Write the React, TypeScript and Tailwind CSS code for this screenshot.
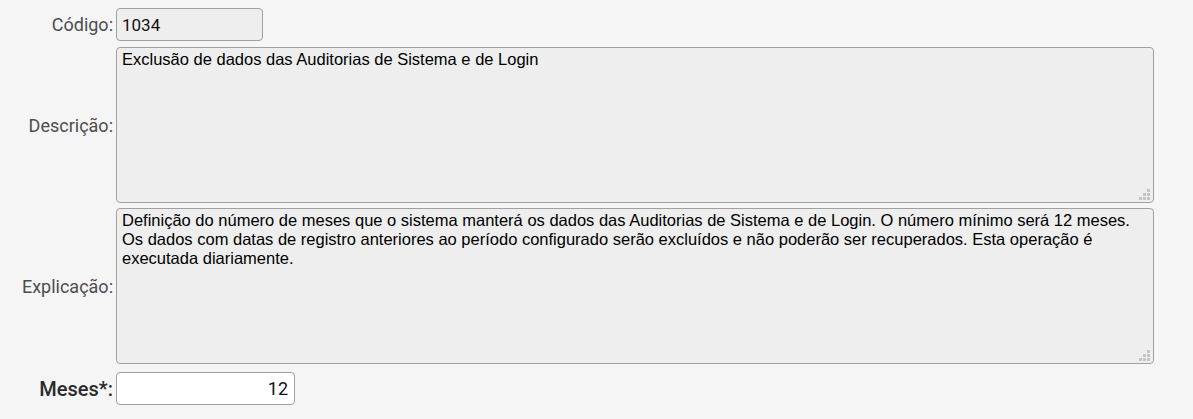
import { useState } from "react";

const labelFont = { fontFamily: "Roboto, 'Liberation Sans', sans-serif" };
const areaFont = { fontFamily: "'Liberation Sans', Arial, sans-serif" };

// Windows-style resize grip drawn over the textarea corner
function Grip() {
  const dots = [
    [8, 0],
    [4, 4], [8, 4],
    [0, 8], [4, 8], [8, 8],
  ];
  return (
    <svg className="pointer-events-none absolute bottom-[3px] right-[4px]" width="11" height="11" viewBox="0 0 11 11">
      {dots.map(([x, y], i) => (
        <rect key={i} x={x} y={y} width="3" height="3" fill="#c4c4c4" />
      ))}
    </svg>
  );
}

export default function App() {
  const [meses, setMeses] = useState("12");

  return (
    <div className="min-h-screen w-full bg-[#f5f5f5]" style={labelFont}>
      <div className="grid grid-cols-[113px_1038px] gap-x-[3px] pt-[8px]">
        {/* Código */}
        <label className="flex items-center justify-end text-[18px] text-[#4d4d4d]">Código:</label>
        <div>
          <input
            readOnly
            value="1034"
            className="h-[33px] w-[147px] rounded-[4px] border border-[#a0a0a0] bg-[#eeeeee] px-[5px] text-[17px] text-[#111] outline-none"
            style={labelFont}
          />
        </div>

        {/* Descrição */}
        <label className="mt-[6px] flex items-center justify-end text-[18px] text-[#4d4d4d]">Descrição:</label>
        <div className="relative mt-[6px]">
          <textarea
            readOnly
            value="Exclusão de dados das Auditorias de Sistema e de Login"
            className="block h-[156px] w-[1038px] resize-none rounded-[4px] border border-[#a0a0a0] bg-[#eeeeee] px-[5px] py-[2px] text-[16.5px] leading-[19px] text-black outline-none"
            style={areaFont}
          />
          <Grip />
        </div>

        {/* Explicação */}
        <label className="mt-[5px] flex items-center justify-end text-[18px] text-[#4d4d4d]">Explicação:</label>
        <div className="relative mt-[5px]">
          <textarea
            readOnly
            value="Definição do número de meses que o sistema manterá os dados das Auditorias de Sistema e de Login. O número mínimo será 12 meses. Os dados com datas de registro anteriores ao período configurado serão excluídos e não poderão ser recuperados. Esta operação é executada diariamente."
            className="block h-[156px] w-[1038px] resize-none rounded-[4px] border border-[#a0a0a0] bg-[#eeeeee] px-[5px] py-[2px] text-[16.5px] leading-[19px] text-black outline-none"
            style={areaFont}
          />
          <Grip />
        </div>

        {/* Meses */}
        <label className="mt-[8px] flex items-center justify-end text-[20px] font-medium text-[#2a2a2a]">Meses*:</label>
        <div className="mt-[8px]">
          <input
            value={meses}
            onChange={(e) => setMeses(e.target.value)}
            className="h-[33px] w-[179px] rounded-[4px] border border-[#a0a0a0] bg-white px-[6px] text-right text-[18px] text-[#111] outline-none"
            style={labelFont}
          />
        </div>
      </div>
    </div>
  );
}
